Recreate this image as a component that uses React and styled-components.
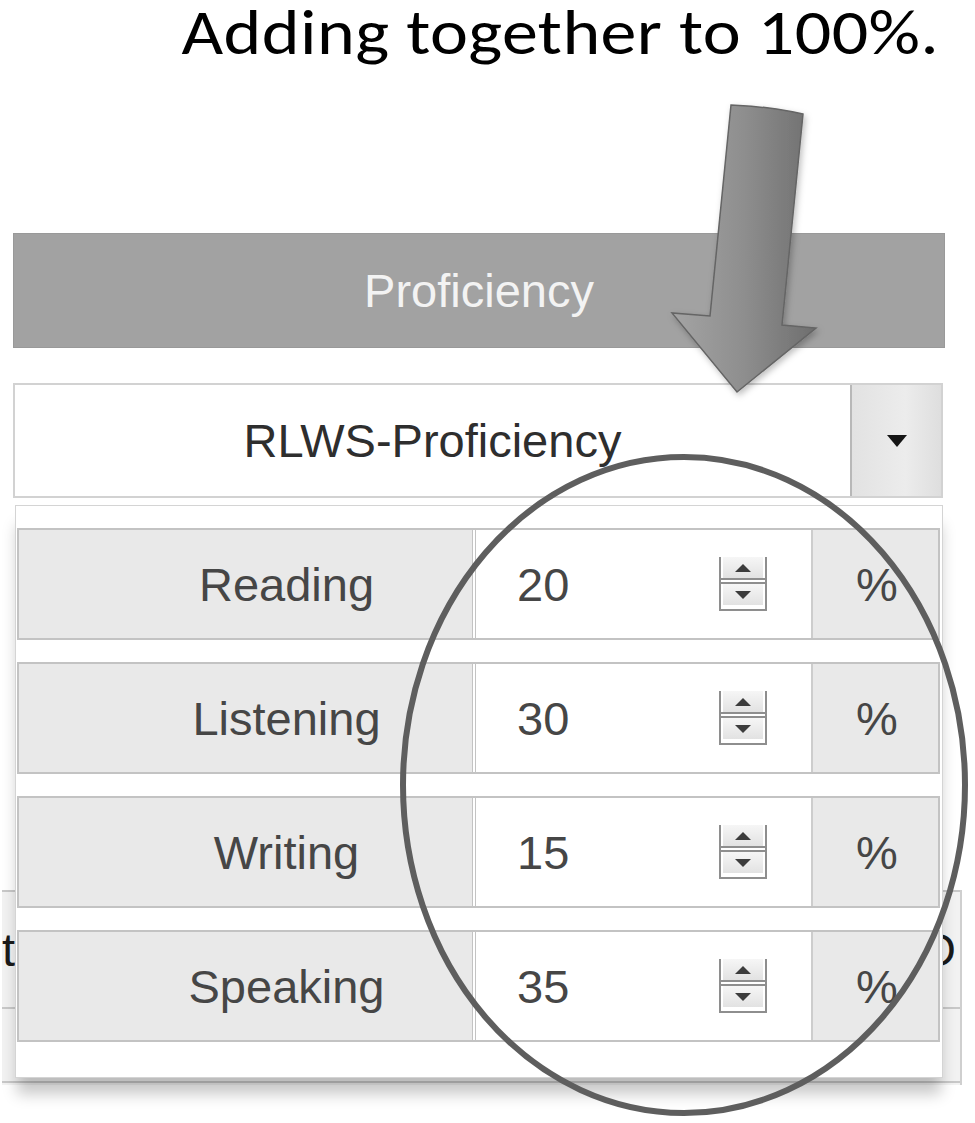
import React from "react";
import styled, { createGlobalStyle } from "styled-components";

const Global = createGlobalStyle`
  html, body { margin: 0; padding: 0; background: #fff; }
  body { font-family: "Liberation Sans", Arial, sans-serif; }
`;

const Page = styled.div`
  position: relative;
  width: 975px;
  height: 1123px;
  overflow: hidden;
  background: #fff;
`;

const Title = styled.div`
  height: 233px;
  display: flex;
  justify-content: flex-end;
  align-items: flex-start;
  padding-right: 36px;
  box-sizing: border-box;
  font-family: Carlito, Lato, "Open Sans", sans-serif;
  font-size: 72px;
  line-height: 1;
  color: #000;
  letter-spacing: 0.4px;
`;

const TitleText = styled.span`
  display: inline-block;
  transform: scaleY(0.88);
  transform-origin: top center;
`;

const Panel = styled.div`
  position: relative;
  z-index: 2;
  width: 932px;
  margin-left: 13px;
`;

const HeaderBar = styled.div`
  height: 115px;
  background: #a2a2a2;
  border: 1px solid #999;
  box-sizing: border-box;
  display: flex;
  align-items: center;
  justify-content: center;
  color: #f3f3f3;
  font-size: 47px;
`;

const SelectWrap = styled.div`
  position: relative;
  margin-top: 35px;
  width: 930px;
`;

const Select = styled.div`
  height: 115px;
  display: flex;
  border: 2px solid #d2d2d2;
  box-sizing: border-box;
  background: #fff;
`;

const SelectValue = styled.div`
  flex: 1;
  display: flex;
  align-items: center;
  justify-content: center;
  font-size: 47px;
  color: #2e2e2e;
`;

const SelectButton = styled.div`
  width: 89px;
  background: linear-gradient(to right, #e2e2e2, #ececec 60%, #dedede);
  border-left: 2px solid #b8b8b8;
  display: flex;
  align-items: center;
  justify-content: center;
`;

const Caret = styled.span`
  width: 0;
  height: 0;
  border-left: 10px solid transparent;
  border-right: 10px solid transparent;
  border-top: 12px solid #151515;
`;

const Menu = styled.div`
  position: absolute;
  top: calc(100% + 7px);
  left: 2px;
  width: 928px;
  height: 573px;
  box-sizing: border-box;
  background: #fff;
  border: 1px solid #d4d4d4;
  padding: 22px 2px 0 1px;
  display: flex;
  flex-direction: column;
  gap: 22px;
  box-shadow: 0 18px 14px -2px rgba(0, 0, 0, 0.22);
`;

const Row = styled.div`
  height: 112px;
  display: grid;
  grid-template-columns: 453px 339px 1fr;
  border: 2px solid #c3c3c3;
  box-sizing: border-box;
`;

const LabelCell = styled.div`
  background: #e9e9e9;
  display: flex;
  align-items: center;
  justify-content: center;
  padding-left: 82px;
  font-size: 47px;
  color: #464646;
`;

const ValueCell = styled.div`
  background: #fff;
  border-left: 4px double #c3c3c3;
  display: flex;
  align-items: center;
  justify-content: space-between;
  padding: 0 44px 0 41px;
  font-size: 47px;
  color: #464646;
`;

const UnitCell = styled.div`
  background: #e9e9e9;
  border-left: 2px solid #cdcdcd;
  display: flex;
  align-items: center;
  justify-content: center;
  padding-left: 3px;
  font-size: 47px;
  color: #464646;
`;

const SpinBox = styled.div`
  width: 48px;
  height: 54px;
  box-sizing: border-box;
  border: 2px solid #8e8e8e;
  border-top: none;
  display: flex;
  flex-direction: column;
`;

const SpinHalf = styled.div`
  height: 21px;
  margin: 0 2px;
  background: linear-gradient(#f6f6f6, #e2e2e2);
  display: flex;
  align-items: center;
  justify-content: center;
`;

const SpinDivider = styled.div`
  height: 2px;
  border-top: 2px solid #8e8e8e;
  border-bottom: 2px solid #8e8e8e;
`;

const Tri = styled.span`
  width: 0;
  height: 0;
  border-left: 8px solid transparent;
  border-right: 8px solid transparent;
  ${(p) =>
    p.$up ? "border-bottom: 8px solid #3c3c3c;" : "border-top: 8px solid #3c3c3c;"}
`;

const BackTable = styled.div`
  position: relative;
  z-index: 1;
  margin: 392px 13px 0 2px;
  border-right: 2px solid #cfcfcf;
  background: #f2f2f2;
`;

const BackRow = styled.div`
  height: ${(p) => p.$h}px;
  border-top: 2px solid #c8c8c8;
  display: flex;
  align-items: center;
  justify-content: space-between;
  padding-right: 4px;
  font-size: 47px;
  color: #1a1a1a;
`;

const Annotation = styled.svg`
  position: absolute;
  left: 0;
  top: 0;
  z-index: 5;
  pointer-events: none;
`;

const rows = [
  { label: "Reading", value: 20 },
  { label: "Listening", value: 30 },
  { label: "Writing", value: 15 },
  { label: "Speaking", value: 35 },
];

function Spinner() {
  return (
    <SpinBox>
      <SpinHalf>
        <Tri $up />
      </SpinHalf>
      <SpinDivider />
      <SpinHalf>
        <Tri />
      </SpinHalf>
    </SpinBox>
  );
}

export default function App() {
  return (
    <Page>
      <Global />
      <Title>
        <TitleText>Adding together to 100%.</TitleText>
      </Title>
      <Panel>
        <HeaderBar>Proficiency</HeaderBar>
        <SelectWrap>
          <Select>
            <SelectValue>RLWS-Proficiency</SelectValue>
            <SelectButton>
              <Caret />
            </SelectButton>
          </Select>
          <Menu>
            {rows.map((r) => (
              <Row key={r.label}>
                <LabelCell>{r.label}</LabelCell>
                <ValueCell>
                  <span>{r.value}</span>
                  <Spinner />
                </ValueCell>
                <UnitCell>%</UnitCell>
              </Row>
            ))}
          </Menu>
        </SelectWrap>
      </Panel>
      <BackTable>
        <BackRow $h={115}>
          <span>t</span>
          <span>D</span>
        </BackRow>
        <BackRow $h={72} />
        <BackRow $h={2} />
      </BackTable>
      <Annotation width="975" height="1123" viewBox="0 0 975 1123">
        <defs>
          <linearGradient id="arrowFill" x1="0" y1="0" x2="1" y2="0">
            <stop offset="0" stopColor="#a4a4a4" />
            <stop offset="0.5" stopColor="#8e8e8e" />
            <stop offset="1" stopColor="#6e6e6e" />
          </linearGradient>
          <filter id="shadow" x="-20%" y="-20%" width="140%" height="140%">
            <feDropShadow dx="2" dy="3" stdDeviation="3" floodColor="#000" floodOpacity="0.25" />
          </filter>
        </defs>
        <path
          d="M731 105 Q767 106 803 114 L782 325 L816 328 L737 392 L672 313 L710 316 Z"
          fill="url(#arrowFill)"
          stroke="#656565"
          strokeWidth="1.5"
          strokeLinejoin="miter"
          filter="url(#shadow)"
        />
        <ellipse cx="684" cy="785" rx="281" ry="328" fill="none" stroke="#5e5e5e" strokeWidth="6" />
      </Annotation>
    </Page>
  );
}
